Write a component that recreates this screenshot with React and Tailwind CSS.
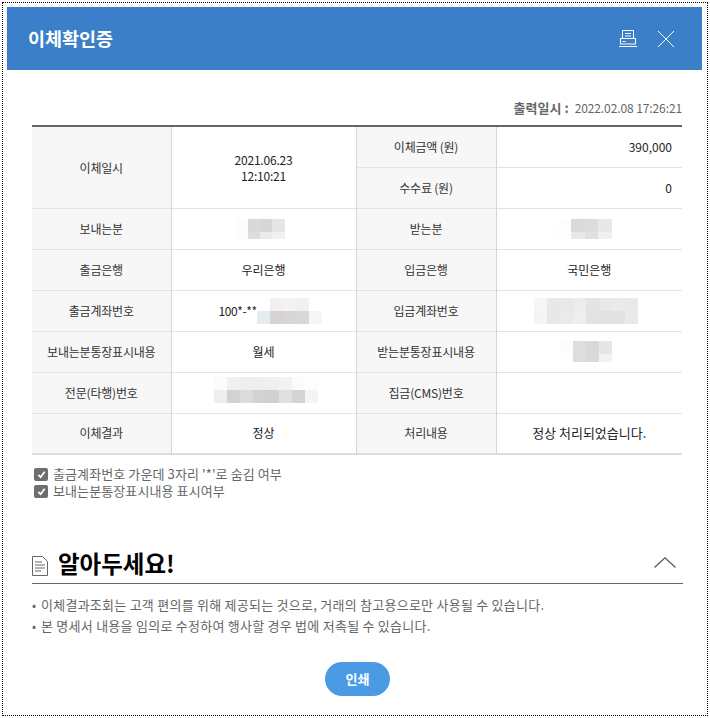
// blurred-out values: each row is a list of cell colours
const Mosaic = ({ cells, width = "w-[13px]", heights = ["h-[13px]", "h-[13px]"], className = "" }) => (
  <div className={`inline-flex flex-col align-middle ${className}`}>
    {cells.map((row, i) => (
      <div key={i} className="flex">
        {row.map((c, j) => (
          <div key={j} className={`${width} ${heights[i]} ${c}`}></div>
        ))}
      </div>
    ))}
  </div>
);

const th = "bg-[#f7f7f7] border-l border-r border-[#d5d5d5] text-center font-normal p-0 text-[#333] tracking-[-0.2px]";
const td = "text-center p-0 text-[#222]";

function Check() {
  return (
    <span className="w-[14px] h-[13px] mt-[3px] rounded-[2px] bg-[#6e6e6e] flex items-center justify-center shrink-0">
      <svg width="9" height="9" viewBox="0 0 10 10" fill="none" stroke="#fff" strokeWidth="2">
        <path d="M1.5 5.5 L4 8 L8.5 2" />
      </svg>
    </span>
  );
}

export default function App() {
  return (
    <div className="w-[710px] h-[718px] bg-white p-[2px] font-['Noto_Sans_CJK_KR','Noto_Sans',sans-serif] text-[12px]">
      <div className="w-[706px] h-[714px] border border-dotted border-black p-[4px]">
        <div className="w-[695px] h-[63px] bg-[#3a7fc7] flex items-center justify-between pl-[21px] pr-[27px]">
          <h1 className="text-white text-[18.5px] font-bold leading-none -mt-px">이체확인증</h1>
          <div className="flex items-center gap-[20px]">
            <svg width="18" height="18" viewBox="0 0 18 18" fill="none" stroke="#fff" strokeWidth="1">
              <path d="M3.5 8V0.5H14.5V8" />
              <path d="M6 3.5H12M6 6H12" />
              <rect x="1.5" y="8.5" width="15" height="5.5" />
              <path d="M3.5 11.5H6.5" />
              <path d="M0 16.5H18" />
            </svg>
            <svg width="18" height="18" viewBox="0 0 18 18" fill="none" stroke="#fff" strokeWidth="1">
              <path d="M1 1L17 17M17 1L1 17" />
            </svg>
          </div>
        </div>

        <div className="pl-[25px] pr-[20px]">
          <div className="h-[55px] flex items-end justify-end pb-[11px] pr-px text-[#666] leading-none">
            <span className="font-bold text-[13px] text-[#666] mr-[6px]">출력일시 :</span>
            <span className="tracking-[-0.1px]">2022.02.08 17:26:21</span>
          </div>

          <table className="w-[650px] table-fixed border-collapse border-t-[2px] border-t-[#666] border-b-[2px] border-b-[#ddd]">
            <colgroup>
              <col className="w-[139px]" />
              <col className="w-[185px]" />
              <col className="w-[140px]" />
              <col />
            </colgroup>
            <tbody>
              <tr className="h-[41px] border-b border-[#e2e2e2]">
                <th rowSpan={2} className={th + " border-l-0 pt-px"}>이체일시</th>
                <td rowSpan={2} className={td + " leading-[16px] tracking-[-0.2px] pt-[2px]"}>2021.06.23<br />12:10:21</td>
                <th className={th}>이체금액 (원)</th>
                <td className={td + " text-right pr-[10px]"}>390,000</td>
              </tr>
              <tr className="h-[41px] border-b border-[#e2e2e2]">
                <th className={th}>수수료 (원)</th>
                <td className={td + " text-right pr-[10px]"}>0</td>
              </tr>
              <tr className="h-[41px] border-b border-[#e2e2e2]">
                <th className={th + " border-l-0"}>보내는분</th>
                <td className={td}>
                  <Mosaic
                    className="mr-[7px]"
                    width="w-[12.25px]"
                    heights={["h-[13px]", "h-[7px]"]}
                    cells={[
                      ["bg-[#fcfcfc]", "bg-[#d8d9da]", "bg-[#d4d6d8]", "bg-[#e6e6ea]"],
                      ["bg-[#fcfcfc]", "bg-[#dcdddd]", "bg-[#ebebeb]", "bg-[#f1f1f1]"],
                    ]}
                  />
                </td>
                <th className={th}>받는분</th>
                <td className={td}>
                  <Mosaic
                    className="mr-[9px]"
                    width="w-[13.5px]"
                    heights={["h-[13px]", "h-[7px]"]}
                    cells={[
                      ["bg-[#fdfdfd]", "bg-[#dadada]", "bg-[#dcdcdc]", "bg-[#e8e8ec]"],
                      ["bg-[#fdfdfd]", "bg-[#e8e8e8]", "bg-[#e0e0e0]", "bg-[#f0f0f2]"],
                    ]}
                  />
                </td>
              </tr>
              <tr className="h-[41px] border-b border-[#e2e2e2]">
                <th className={th + " border-l-0"}>출금은행</th>
                <td className={td}>우리은행</td>
                <th className={th}>입금은행</th>
                <td className={td}>국민은행</td>
              </tr>
              <tr className="h-[41px] border-b border-[#e2e2e2]">
                <th className={th + " border-l-0"}>출금계좌번호</th>
                <td className={td}>
                  <div className="flex items-center pl-[47px]">
                    <span className="w-[38px] whitespace-nowrap tracking-[-0.4px]">100*-**</span>
                    <Mosaic cells={[
                      ["bg-[#ffffff]", "bg-[#f2f0f0]", "bg-[#f4f2f4]", "bg-[#f0f0f0]", "bg-[#ffffff]"],
                      ["bg-[#e4ecf0]", "bg-[#d8d2d6]", "bg-[#d8d4d8]", "bg-[#d8d8da]", "bg-[#f6f6f6]"],
                    ]} />
                  </div>
                </td>
                <th className={th}>입금계좌번호</th>
                <td className={td}>
                  <Mosaic
                    className="mr-[6px]"
                    cells={[
                      ["bg-[#f6f6f6]", "bg-[#e8e8e8]", "bg-[#e6e8ea]", "bg-[#ececec]", "bg-[#e4e4e4]", "bg-[#e8e8e8]", "bg-[#eaeaea]", "bg-[#e8e8e8]"],
                      ["bg-[#f4f4f4]", "bg-[#e8e8e8]", "bg-[#eaeaea]", "bg-[#eeeeee]", "bg-[#e2e4e4]", "bg-[#e2e2e2]", "bg-[#e2e2e2]", "bg-[#e8eaea]"],
                    ]}
                  />
                </td>
              </tr>
              <tr className="h-[41px] border-b border-[#e2e2e2]">
                <th className={th + " border-l-0"}>보내는분통장표시내용</th>
                <td className={td}>월세</td>
                <th className={th}>받는분통장표시내용</th>
                <td className={td}>
                  <Mosaic
                    className="mr-[7px]"
                    heights={["h-[13px]", "h-[8px]"]}
                    cells={[
                      ["bg-[#fdfcfc]", "bg-[#dddddd]", "bg-[#d8dada]", "bg-[#e6e6e6]"],
                      ["bg-[#fefefe]", "bg-[#dddddd]", "bg-[#d8dada]", "bg-[#f2f2f2]"],
                    ]}
                  />
                </td>
              </tr>
              <tr className="h-[41px] border-b border-[#e2e2e2]">
                <th className={th + " border-l-0"}>전문(타행)번호</th>
                <td className={td}>
                  <Mosaic
                    className="ml-[4px] mb-[5px]"
                    cells={[
                      ["bg-[#fbfbfb]", "bg-[#f0f0f0]", "bg-[#eeeeee]", "bg-[#efefef]", "bg-[#f0f0f0]", "bg-[#f2f2f2]", "bg-[#fbfbfb]", "bg-[#fdfdfd]"],
                      ["bg-[#eeeeee]", "bg-[#d2d2d2]", "bg-[#dcdcdc]", "bg-[#d2d2d2]", "bg-[#d0d0d0]", "bg-[#e0e0e0]", "bg-[#d4d4d4]", "bg-[#f4f4f4]"],
                    ]}
                  />
                </td>
                <th className={th}>집금(CMS)번호</th>
                <td className={td}></td>
              </tr>
              <tr className="h-[41px]">
                <th className={th + " border-l-0"}>이체결과</th>
                <td className={td}>정상</td>
                <th className={th}>처리내용</th>
                <td className={td + " text-[13px] leading-[16px]"}>정상 처리되었습니다.</td>
              </tr>
            </tbody>
          </table>

          <div className="mt-[10px] flex flex-col text-[#666] text-[13px] tracking-[0.1px] leading-[17px]">
            <label className="flex items-start gap-[5px] pl-[2px]"><Check />출금계좌번호 가운데 3자리 '*'로 숨김 여부</label>
            <label className="flex items-start gap-[5px] pl-[2px]"><Check />보내는분통장표시내용 표시여부</label>
          </div>

          <div className="mt-[41px] h-[44px] pt-[4px] flex items-center justify-between border-b border-[#666] pr-[7px]">
            <div className="flex items-center gap-[10px]">
              <svg width="16" height="20" viewBox="0 0 16 20" fill="none" stroke="#666" strokeWidth="1" className="mt-[5px]">
                <path d="M0.5 0.5H10.5L15.5 5.5V19.5H0.5Z" />
                <path d="M3 6H10M3 9H13M3 12H13M3 15H9" />
              </svg>
              <h2 className="text-[23.5px] font-bold text-black leading-none">알아두세요!</h2>
            </div>
            <svg width="22" height="11" viewBox="0 0 22 11" fill="none" stroke="#555" strokeWidth="1.2" className="mb-[3px]">
              <path d="M0.5 10.5L11 0.8L21.5 10.5" />
            </svg>
          </div>

          <ul className="mt-[10px] text-[#666] text-[13px] tracking-[0.25px] leading-[21px]">
            <li className="flex"><span className="w-[9px] text-[12px] shrink-0">•</span>이체결과조회는 고객 편의를 위해 제공되는 것으로, 거래의 참고용으로만 사용될 수 있습니다.</li>
            <li className="flex"><span className="w-[9px] text-[12px] shrink-0">•</span>본 명세서 내용을 임의로 수정하여 행사할 경우 법에 저촉될 수 있습니다.</li>
          </ul>

          <div className="mt-[26px] flex justify-center">
            <button className="w-[65px] h-[34px] rounded-full bg-[#4a9ae4] text-white font-bold text-[13px]">인쇄</button>
          </div>
        </div>
      </div>
    </div>
  );
}
